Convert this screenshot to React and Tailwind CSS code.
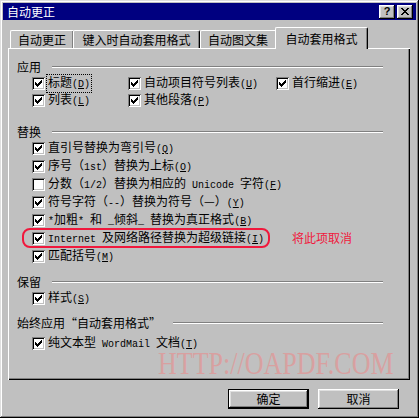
import React from 'react';

const raised = "shadow-[inset_-1px_-1px_#000,inset_1px_1px_#fff,inset_-2px_-2px_#808080,inset_2px_2px_#dfdfdf]";

// split a label so ASCII runs get the half-width mono font
function T({ s }) {
  const parts = s.split(/([\x20-\x7e]+)/);
  return parts.map((p, i) =>
    /^[\x20-\x7e]+$/.test(p) ? (
      <span key={i} className="font-['Liberation_Mono',monospace] text-[10px]">{p}</span>
    ) : (
      <React.Fragment key={i}>{p}</React.Fragment>
    )
  );
}

const checkCols = [
  [3, 5], [4, 6], [5, 7], [6, 6], [7, 5], [8, 4], [9, 3],
];

function Checkbox({ checked }) {
  return (
    <span className="w-[13px] h-[13px] shrink-0 bg-white shadow-[inset_1px_1px_#808080,inset_-1px_-1px_#fff,inset_2px_2px_#000,inset_-2px_-2px_#c0c0c0]">
      {checked && (
        <svg width="13" height="13" viewBox="0 0 13 13" shapeRendering="crispEdges">
          {checkCols.map(([x, y]) => (
            <rect key={x} x={x} y={y} width="1" height="3" fill="#000" />
          ))}
        </svg>
      )}
    </span>
  );
}

function Item({ label, k, checked = true, focus = false, className = '' }) {
  return (
    <div className={"flex items-center " + className}>
      <Checkbox checked={checked} />
      <span className={"ml-[2px] px-[1px] whitespace-nowrap " + (focus ? "outline-1 outline-dotted outline-black" : "")}>
        <T s={label} />
        <span className="font-['Liberation_Mono',monospace] text-[10px]">
          (<u className="underline-offset-1">{k}</u>)
        </span>
      </span>
    </div>
  );
}

function Group({ title }) {
  return (
    <div className="flex items-center h-[14px] pl-[9px] pr-[27px]">
      <span className="whitespace-nowrap">{title}</span>
      <div className="flex-1 ml-[11px] h-[2px] border-t border-t-[#808080] border-b border-b-white" />
    </div>
  );
}

const closePixels = [
  [0, 0], [1, 0], [6, 0], [7, 0],
  [1, 1], [2, 1], [5, 1], [6, 1],
  [2, 2], [3, 2], [4, 2], [5, 2],
  [3, 3], [4, 3],
  [2, 4], [3, 4], [4, 4], [5, 4],
  [1, 5], [2, 5], [5, 5], [6, 5],
  [0, 6], [1, 6], [6, 6], [7, 6],
];

export default function App() {
  return (
    <div className={"relative w-[419px] h-[418px] bg-[#c0c0c0] p-[3px] flex flex-col text-[12px] leading-[14px] text-black font-['Noto_Sans_CJK_SC',sans-serif] shadow-[inset_-1px_-1px_#000,inset_1px_1px_#dfdfdf,inset_-2px_-2px_#808080,inset_2px_2px_#fff]"}>
      {/* title bar */}
      <div className="h-[17px] bg-[#000080] flex items-center pl-[4px] pr-[3px]">
        <span className="text-white">自动更正</span>
        <div className="ml-auto flex gap-[2px]">
          <div className={"w-[16px] h-[14px] bg-[#c0c0c0] flex items-center justify-center " + raised}>
            <span className="font-['Liberation_Sans',sans-serif] font-bold text-[11px] leading-none">?</span>
          </div>
          <div className={"w-[16px] h-[14px] bg-[#c0c0c0] flex items-center justify-center " + raised}>
            <svg width="8" height="7" viewBox="0 0 8 7" shapeRendering="crispEdges">
              {closePixels.map(([x, y]) => (
                <rect key={x + '-' + y} x={x} y={y} width="1" height="1" fill="#000" />
              ))}
            </svg>
          </div>
        </div>
      </div>

      {/* tabs */}
      <div className="mt-[7px] ml-[7px] h-[21px] flex items-end">
        <div className="w-[63px] h-[18px] pt-[2px] text-center border-t border-l border-white rounded-tl-[2px] shadow-[inset_-1px_0_#808080]">自动更正</div>
        <div className="w-[127px] h-[18px] pt-[2px] text-center border-t border-l border-white border-r border-r-black rounded-t-[2px] shadow-[inset_-1px_0_#808080]">键入时自动套用格式</div>
        <div className="w-[75px] h-[18px] pt-[2px] text-center border-t border-l border-white rounded-tl-[2px]">自动图文集</div>
        <div className="relative z-10 w-[93px] h-[22px] -mb-[1px] pt-[4px] text-center bg-[#c0c0c0] border-t border-l border-white border-r border-r-black rounded-t-[2px] shadow-[inset_-1px_0_#808080]">自动套用格式</div>
      </div>

      {/* panel */}
      <div className="ml-[5px] w-[402px] h-[332px] pt-[12px] flex flex-col shadow-[inset_1px_1px_#fff,inset_-1px_-1px_#000,inset_-2px_-2px_#808080]">
        <Group title="应用" />
        <div className="mt-[1px] pl-[24px] flex h-[17px]">
          <Item label="标题" k="D" focus className="w-[96px]" />
          <Item label="自动项目符号列表" k="U" className="w-[148px]" />
          <Item label="首行缩进" k="E" />
        </div>
        <div className="pl-[24px] flex h-[17px]">
          <Item label="列表" k="L" className="w-[96px]" />
          <Item label="其他段落" k="P" />
        </div>

        <div className="mt-[16px]">
          <Group title="替换" />
        </div>
        <div className="pl-[24px] flex flex-col">
          <Item label="直引号替换为弯引号" k="Q" className="h-[18px]" />
          <Item label="序号（1st）替换为上标" k="O" className="h-[18px]" />
          <Item label="分数（1/2）替换为相应的 Unicode 字符" k="F" checked={false} className="h-[18px]" />
          <Item label="符号字符（--）替换为符号（—）" k="Y" className="h-[18px]" />
          <Item label="*加粗* 和 _倾斜_ 替换为真正格式" k="B" className="h-[18px]" />
          <div className="relative h-[18px]">
            <Item label="Internet 及网络路径替换为超级链接" k="I" className="h-[18px]" />
            <div className="absolute -left-[10px] -top-[1px] w-[248px] h-[20px] border-2 border-[#f0183c] rounded-[8px]" />
            <span className="absolute left-[260px] top-[2px] text-[#f0183c] whitespace-nowrap">将此项取消</span>
          </div>
          <Item label="匹配括号" k="M" className="h-[18px]" />
        </div>

        <div className="mt-[10px]">
          <Group title="保留" />
        </div>
        <div className="pl-[24px]">
          <Item label="样式" k="S" className="h-[18px]" />
        </div>

        <div className="mt-[9px] flex items-center h-[14px] pl-[9px] pr-[27px]">
          <span className="whitespace-nowrap">始终应用“自动套用格式”</span>
          <div className="flex-1 ml-[12px] h-[2px] border-t border-t-[#808080] border-b border-b-white" />
        </div>
        <div className="mt-[4px] pl-[24px]">
          <Item label="纯文本型 WordMail 文档" k="T" className="h-[18px]" />
        </div>
      </div>

      {/* buttons */}
      <div className="mt-[9px] flex justify-end gap-[9px] pr-[17px]">
        <div className="w-[81px] h-[20px] border border-black">
          <div className={"w-full h-full flex items-center justify-center bg-[#c0c0c0] " + raised}>确定</div>
        </div>
        <div className={"w-[81px] h-[20px] flex items-center justify-center bg-[#c0c0c0] " + raised}>取消</div>
      </div>

      {/* watermark */}
      <div className="absolute left-[158px] top-[351px] pointer-events-none font-['Liberation_Serif',serif] text-[26px] leading-[26px] text-[#d8a0a0] scale-y-125 whitespace-nowrap">
        HTTP://OAPDF.COM
      </div>
    </div>
  );
}
